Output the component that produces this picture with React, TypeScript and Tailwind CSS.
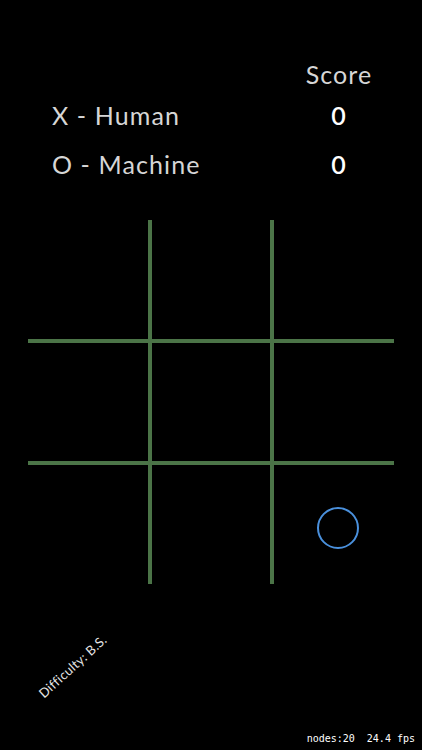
export default function App() {
  const cells = Array.from({ length: 9 }, (_, i) => i);

  return (
    <div className="relative h-[750px] w-[422px] overflow-hidden bg-black font-['Lato','Noto_Sans',sans-serif]">
      {/* score table */}
      <div className="pt-[58px] pl-[52px] pr-[43px] text-[25px] tracking-[1.1px] text-[#d6d6d6]">
        <div className="flex h-[34px] items-center">
          <div className="flex-1"></div>
          <div className="w-[80px] text-center">Score</div>
        </div>
        <div className="mt-[7px] flex h-[34px] items-center">
          <div className="flex-1">X - Human</div>
          <div className="w-[80px] text-center font-semibold text-white">0</div>
        </div>
        <div className="mt-[15px] flex h-[34px] items-center">
          <div className="flex-1">O - Machine</div>
          <div className="w-[80px] text-center font-semibold text-white">0</div>
        </div>
      </div>

      {/* board */}
      <div className="ml-[28px] mt-[38px] grid w-[366px] grid-cols-[120px_118px_120px] grid-rows-[119px_118px_119px] gap-[4px] bg-[#4b7447]">
        {cells.map((i) => (
          <div key={i} className="flex items-center justify-center bg-black">
            {i === 8 && (
              <div className="ml-[7px] mt-[6px] h-[42px] w-[42px] rounded-full border-2 border-[#4a90dc]"></div>
            )}
          </div>
        ))}
      </div>

      {/* difficulty */}
      <div className="absolute left-[30px] top-[657px] -rotate-[42deg] text-[13px] tracking-[0.3px] text-[#e5e5e5]">
        Difficulty: B.S.
      </div>

      {/* stats */}
      <div className="absolute bottom-[5px] right-[7px] font-['DejaVu_Sans_Mono',monospace] text-[10px] leading-[12px] text-white whitespace-pre">
        nodes:20  24.4 fps
      </div>
    </div>
  );
}
